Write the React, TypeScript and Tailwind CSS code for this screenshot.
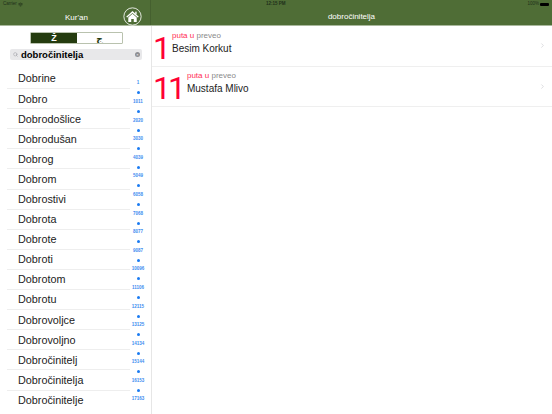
import React from 'react';
import { ChevronRight, Search, Wifi } from 'lucide-react';

const words = [
  'Dobrine', 'Dobro', 'Dobrodošlice', 'Dobrodušan', 'Dobrog', 'Dobrom', 'Dobrostivi', 'Dobrota', 'Dobrote',
  'Dobroti', 'Dobrotom', 'Dobrotu', 'Dobrovoljce', 'Dobrovoljno', 'Dobročinitelj', 'Dobročinitelja', 'Dobročinitelje',
];

const indexLabels = [
  '1', '1011', '2020', '3030', '4039', '5049', '6058', '7068', '8077', '9087',
  '10096', '11106', '12115', '13125', '14134', '15144', '16153', '17163',
];

const results = [
  { count: '1', name: 'Besim Korkut' },
  { count: '11', name: 'Mustafa Mlivo' },
];

function HomeIcon() {
  return (
    <svg width="19" height="19" viewBox="0 0 18 18" className="shrink-0">
      <circle cx="9" cy="9" r="8.2" fill="none" stroke="#ffffff" strokeWidth="0.8" />
      <path d="M3 9.2 9 3.8l6 5.4-1 .8L9 5.6 4 10z" fill="#ffffff" />
      <path d="M5 10 9 6.5l4 3.5v4.3h-2.8v-3H7.8v3H5z" fill="#ffffff" />
      <rect x="11.6" y="4.4" width="1.3" height="2.6" fill="#ffffff" />
    </svg>
  );
}

export default function App() {
  return (
    <div className="flex h-[414px] w-[552px] flex-col overflow-hidden bg-white font-['Liberation_Sans',sans-serif] text-black">
      <header className="relative flex h-[26px] shrink-0 border-b border-[#a9b89c] bg-[#4f6d36]">
        <div className="absolute left-[3px] top-[1px] flex items-center gap-[1px] leading-[6px] text-[#20301a]">
          <span className="text-[4.5px]">Carrier</span>
          <Wifi size={5} strokeWidth={3} />
        </div>
        <span className="absolute left-[266px] top-[1px] text-[4.5px] font-bold leading-[6px] text-[#20301a]">12:15 PM</span>
        <div className="absolute right-[3px] top-[1px] flex items-center gap-[1px] text-[4.5px] leading-[6px] text-[#20301a]">
          <span>100%</span>
          <span className="h-[3px] w-[9px] rounded-[1px] bg-black" />
        </div>

        <div className="flex w-[151px] items-center justify-between border-r border-[#45602f] pl-[65px] pr-[8px] pt-[7px]">
          <span className="pt-[3px] text-[8px] text-white">Kur'an</span>
          <HomeIcon />
        </div>
        <div className="flex flex-1 items-center justify-center pt-[9px]">
          <span className="text-[8px] text-white">dobročinitelja</span>
        </div>
      </header>

      <div className="flex min-h-0 flex-1">
        <aside className="relative w-[152px] shrink-0 border-r border-[#e6e6e6]">
          <div className="ml-[30px] mt-[6px] flex h-[12px] w-[93px] overflow-hidden rounded-[1px] border border-[#b9c2ae]">
            <div className="flex w-[46px] items-center justify-center bg-[#253c0f] pt-[1px] text-[9px] font-bold leading-none text-white">Ž</div>
            <div className="flex flex-1 items-center justify-center bg-white font-['Noto_Sans','DejaVu_Sans',sans-serif] text-[9px] font-bold leading-none text-[#253c0f]">ج</div>
          </div>

          <div className="ml-[10px] mt-[5px] flex h-[11px] w-[132px] items-center rounded-[2px] bg-[#e8e8ea] pl-[3px] pr-[2px]">
            <Search size={5} className="text-[#8e8e93]" />
            <span className="ml-[3px] flex-1 text-[9.5px] font-bold leading-[11px]">dobročinitelja</span>
            <span className="flex h-[5px] w-[5px] items-center justify-center rounded-full bg-[#8e8e93] text-[4px] leading-none text-white">×</span>
          </div>

          <ul className="ml-[7px] mt-[9px] w-[123px]">
            {words.map((word, i) => (
              <li
                key={word}
                className={`flex h-[20.1px] items-center pl-[11px] text-[10.8px] text-[#222222] ${i < words.length - 1 ? 'border-b border-[#eeeeee]' : ''}`}
              >
                {word}
              </li>
            ))}
          </ul>

          {/* section index */}
          <div className="absolute left-[125px] top-[53px] flex w-[26px] flex-col items-center">
            {indexLabels.map((label, i) => (
              <React.Fragment key={label}>
                <span className="flex h-[9.3px] items-center text-[4.5px] font-bold leading-none text-[#3d8bf0]">{label}</span>
                {i < indexLabels.length - 1 && (
                  <span className="flex h-[9.3px] items-center">
                    <span className="h-[3px] w-[3px] rounded-full bg-[#1a7bf2]" />
                  </span>
                )}
              </React.Fragment>
            ))}
          </div>
        </aside>

        <main className="flex-1">
          {results.map((r) => (
            <div key={r.name} className="flex h-[40.5px] items-center border-b border-[#efefef] pl-[1px] pr-[6px]">
              <span className="pt-[4px] font-['Roboto',sans-serif] text-[32px] font-normal leading-none tracking-[-3px] text-[#ff0033]">{r.count}</span>
              <div className="ml-[4px] flex-1 pb-[6px]">
                <div className="text-[8px] leading-[9px] text-[#8a8a8a]">
                  <span className="text-[#ff2d55]">puta u</span> preveo
                </div>
                <div className="mt-[3px] text-[10px] leading-[12px] text-[#222222]">{r.name}</div>
              </div>
              <ChevronRight size={7} className="text-[#c7c7cc]" />
            </div>
          ))}
        </main>
      </div>
    </div>
  );
}
